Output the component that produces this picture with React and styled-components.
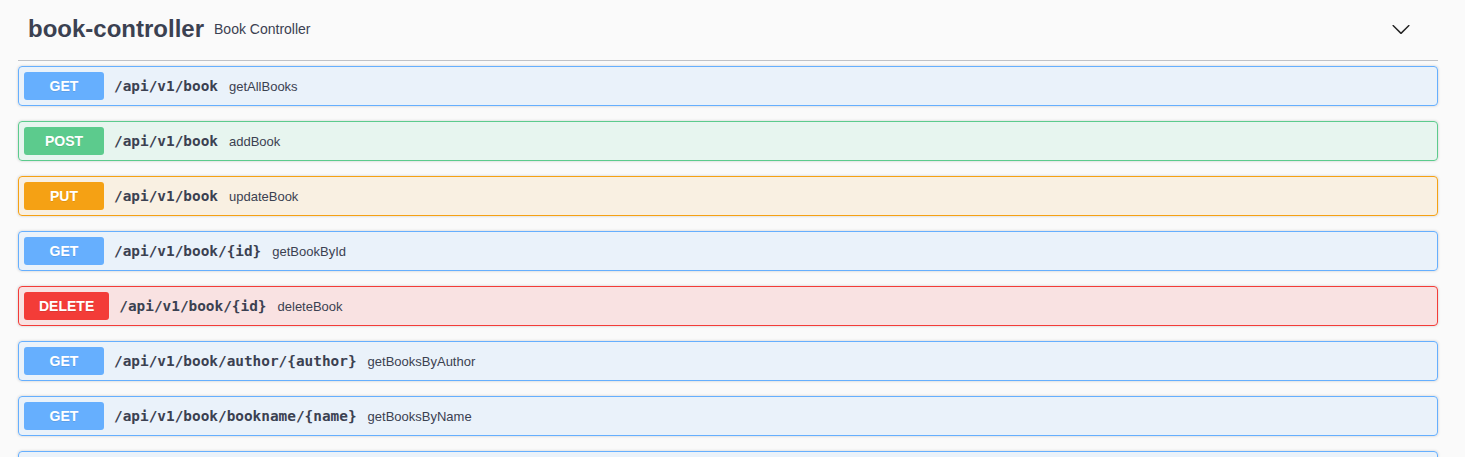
import React from 'react';
import styled, { createGlobalStyle } from 'styled-components';

const GlobalStyle = createGlobalStyle`
  html, body {
    margin: 0;
    padding: 0;
    background: #fafafa;
  }
  body {
    font-family: 'Liberation Sans', Arial, sans-serif;
    color: #3b4151;
  }
`;

const METHODS = {
  get: '#66affe',
  post: '#5ccb8d',
  put: '#f5a114',
  delete: '#f33c38',
};

const TINTS = {
  get: 'rgba(97, 175, 254, 0.1)',
  post: 'rgba(73, 204, 144, 0.1)',
  put: 'rgba(245, 161, 20, 0.1)',
  delete: 'rgba(243, 60, 56, 0.12)',
};

const Wrapper = styled.div`
  padding: 0 27px 0 18px;
`;

const TagHeader = styled.div`
  display: flex;
  align-items: center;
  height: 61px;
  box-sizing: border-box;
  padding: 0 20px 3px 10px;
  margin-bottom: 5px;
  border-bottom: 1px solid rgba(59, 65, 81, 0.3);
`;

const TagName = styled.h3`
  margin: 0;
  font-size: 24px;
  font-weight: 700;
  color: #3b4151;
`;

const TagDesc = styled.small`
  flex: 1;
  padding: 0 10px;
  font-size: 14px;
  color: #3b4151;
`;

const Expand = styled.button`
  border: none;
  background: none;
  padding: 0 7px 0 0;
  display: flex;
  align-items: center;
  cursor: pointer;
`;

const Block = styled.div`
  display: flex;
  align-items: center;
  padding: 5px;
  margin-bottom: 15px;
  border: 1px solid ${(p) => METHODS[p.method]};
  border-radius: 4px;
  background: ${(p) => TINTS[p.method]};
  box-shadow: 0 0 3px rgba(0, 0, 0, 0.19);
`;

const Method = styled.span`
  min-width: 80px;
  box-sizing: border-box;
  padding: 6px 15px;
  text-align: center;
  font-size: 14px;
  line-height: 16px;
  font-weight: 700;
  color: #fff;
  border-radius: 3px;
  background: ${(p) => METHODS[p.method]};
  text-shadow: 0 1px 0 rgba(0, 0, 0, 0.1);
`;

const Path = styled.span`
  padding: 0 11px 0 10px;
  font-family: 'DejaVu Sans Mono', 'Liberation Mono', monospace;
  font-size: 14.4px;
  font-weight: 700;
  color: #3b4151;
`;

const Summary = styled.span`
  font-size: 13px;
  color: #3b4151;
`;

const ops = [
  { method: 'get', path: '/api/v1/book', summary: 'getAllBooks' },
  { method: 'post', path: '/api/v1/book', summary: 'addBook' },
  { method: 'put', path: '/api/v1/book', summary: 'updateBook' },
  { method: 'get', path: '/api/v1/book/{id}', summary: 'getBookById' },
  { method: 'delete', path: '/api/v1/book/{id}', summary: 'deleteBook' },
  { method: 'get', path: '/api/v1/book/author/{author}', summary: 'getBooksByAuthor' },
  { method: 'get', path: '/api/v1/book/bookname/{name}', summary: 'getBooksByName' },
  { method: 'get', path: '/api/v1/book/isbn/{isbn}', summary: 'getBookByIsbn' },
];

const App = () => (
  <Wrapper>
    <GlobalStyle />
    <TagHeader>
      <TagName>book-controller</TagName>
      <TagDesc>Book Controller</TagDesc>
      <Expand aria-label='collapse'>
        <svg width='20' height='20' viewBox='0 0 20 20'>
          <path
            fill='#222'
            d='M17.418 6.109c.272-.268.709-.268.979 0s.271.701 0 .969l-7.908 7.83c-.27.268-.707.268-.979 0l-7.908-7.83c-.27-.268-.27-.701 0-.969.271-.268.709-.268.979 0L10 13.25l7.418-7.141z'
          />
        </svg>
      </Expand>
    </TagHeader>
    {ops.map((op, i) => (
      <Block key={i} method={op.method}>
        <Method method={op.method}>{op.method.toUpperCase()}</Method>
        <Path>{op.path}</Path>
        <Summary>{op.summary}</Summary>
      </Block>
    ))}
  </Wrapper>
);

export default App;
